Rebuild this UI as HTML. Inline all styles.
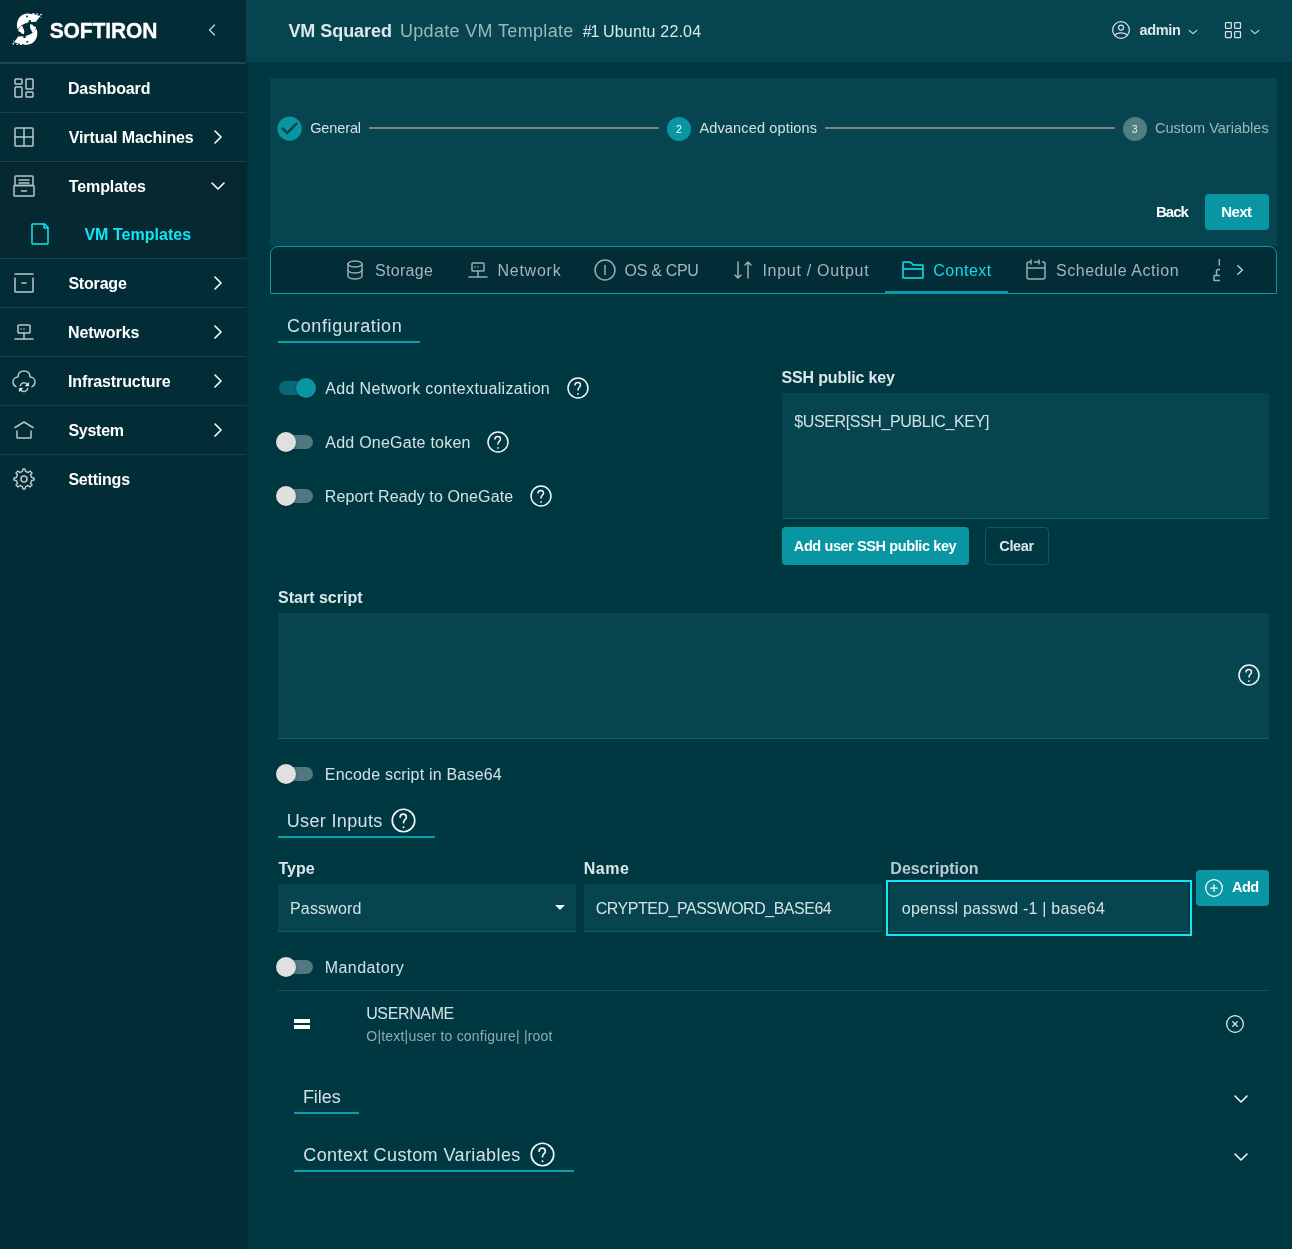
<!DOCTYPE html>
<html lang="en">
<head>
<meta charset="utf-8">
<title>VM Squared - Update VM Template</title>
<style>
html,body{margin:0;padding:0;}
body{width:1292px;height:1249px;overflow:hidden;background:#003842;position:relative;font-family:"Liberation Sans",sans-serif;}
.a{position:absolute;}
.t{position:absolute;white-space:pre;line-height:1;font-family:"Liberation Sans",sans-serif;}
svg{position:absolute;overflow:visible;}
.side{left:0;top:0;width:246px;height:1249px;background:#022c36;box-shadow:1px 0 2px rgba(0,0,0,.28);}
.sdiv{left:0;width:246px;height:1px;background:#1c4049;}
.hdr{left:246px;top:0;width:1046px;height:62px;background:#06454f;}
.panel{background:#06454f;}
.track{width:34px;height:14px;border-radius:7px;background:#50787f;}
.knob{width:20px;height:20px;border-radius:10px;background:#e0e0e0;box-shadow:0 1px 3px rgba(0,0,0,.32);}
.ul{height:2px;background:#0a9eac;}
.field{background:#06454f;border-bottom:1px solid #07636c;box-sizing:border-box;}
</style>
</head>
<body>
<!-- sidebar -->
<div class="a side"></div>
<div class="a" style="left:0;top:162px;width:246px;height:96px;background:#062831"></div>
<div class="a sdiv" style="top:62px;height:2px;background:#1f444d"></div>
<div class="a sdiv" style="top:112px"></div>
<div class="a sdiv" style="top:161px"></div>
<div class="a sdiv" style="top:258px"></div>
<div class="a sdiv" style="top:307px"></div>
<div class="a sdiv" style="top:356px"></div>
<div class="a sdiv" style="top:405px"></div>
<div class="a sdiv" style="top:454px"></div>
<!-- header -->
<div class="a hdr"></div>
<!-- stepper panel -->
<div class="a panel" style="left:270px;top:78px;width:1007px;height:168px"></div>
<div class="a" style="left:667px;top:117px;width:24px;height:24px;border-radius:12px;background:#0a95a2"></div>
<div class="a" style="left:1123px;top:117px;width:24px;height:24px;border-radius:12px;background:#507d84"></div>
<div class="a" style="left:369px;top:127px;width:290px;height:2px;background:#857e7e"></div>
<div class="a" style="left:825px;top:127px;width:290px;height:2px;background:#857e7e"></div>
<div class="a" style="left:1205px;top:194px;width:64px;height:36px;border-radius:4px;background:#0a95a2"></div>
<!-- tabs bar -->
<div class="a" style="left:270px;top:246px;width:1007px;height:48px;box-sizing:border-box;background:#022c36;border:1px solid #0a95a2;border-radius:8px 8px 0 0"></div>
<div class="a ul" style="left:885px;top:291px;width:123px"></div>
<!-- section underlines -->
<div class="a ul" style="left:278px;top:341px;width:142px"></div>
<div class="a ul" style="left:278px;top:836px;width:157px"></div>
<div class="a ul" style="left:294px;top:1112px;width:65px"></div>
<div class="a ul" style="left:294px;top:1170px;width:280px"></div>
<!-- toggles -->
<div class="a track" style="left:279px;top:381px;background:#066975"></div>
<div class="a knob" style="left:296px;top:378px;background:#0995a2"></div>
<div class="a track" style="left:279px;top:435px"></div>
<div class="a knob" style="left:276px;top:432px"></div>
<div class="a track" style="left:279px;top:489px"></div>
<div class="a knob" style="left:276px;top:486px"></div>
<div class="a track" style="left:279px;top:767px"></div>
<div class="a knob" style="left:276px;top:764px"></div>
<div class="a track" style="left:279px;top:960px"></div>
<div class="a knob" style="left:276px;top:957px"></div>
<!-- fields -->
<div class="a field" style="left:782px;top:393px;width:487px;height:126px"></div>
<div class="a" style="left:782px;top:527px;width:187px;height:38px;border-radius:4px;background:#0a95a2"></div>
<div class="a" style="left:985px;top:527px;width:64px;height:38px;border-radius:4px;box-sizing:border-box;border:1px solid #065e68"></div>
<div class="a field" style="left:278px;top:613px;width:991px;height:126px"></div>
<div class="a field" style="left:278px;top:884px;width:298px;height:48px"></div>
<div class="a field" style="left:584px;top:884px;width:298px;height:48px"></div>
<div class="a" style="left:886px;top:880px;width:306px;height:56px;box-sizing:border-box;border:2px solid #10e6f4"></div>
<div class="a field" style="left:890px;top:884px;width:298px;height:48px"></div>
<div class="a" style="left:1196px;top:870px;width:73px;height:36px;border-radius:4px;background:#0a95a2"></div>
<!-- list -->
<div class="a" style="left:278px;top:990px;width:991px;height:1px;background:#1a4f58"></div>
<div class="a" style="left:294px;top:1019px;width:16px;height:4px;background:#fff"></div>
<div class="a" style="left:294px;top:1025px;width:16px;height:4px;background:#fff"></div>
<svg style="left:12px;top:76px" width="24" height="24" viewBox="0 0 24 24" fill="none" stroke="#b7c6c9" stroke-width="1.5" stroke-linecap="round" stroke-linejoin="round" ><rect x="3" y="3" width="7" height="5" rx=".8"/><rect x="3" y="11" width="7" height="10" rx=".8"/><rect x="14" y="3" width="7" height="10" rx=".8"/><rect x="14" y="16" width="7" height="5" rx=".8"/></svg>
<svg style="left:12px;top:125px" width="24" height="24" viewBox="0 0 24 24" fill="none" stroke="#b7c6c9" stroke-width="1.5" stroke-linecap="round" stroke-linejoin="round" ><rect x="3" y="3" width="18" height="18" rx=".8"/><path d="M12 3v18M3 12h18"/></svg>
<svg style="left:12px;top:174px" width="24" height="24" viewBox="0 0 24 24" fill="none" stroke="#b7c6c9" stroke-width="1.5" stroke-linecap="round" stroke-linejoin="round" ><rect x="3" y="2" width="18" height="9.5" rx=".8"/><rect x="2" y="11.5" width="20" height="10.5" rx=".8"/><path d="M7 6h10M7 9h10M9.5 17h5"/></svg>
<svg style="left:28px;top:222px" width="24" height="24" viewBox="0 0 24 24" fill="none" stroke="#10e6f4" stroke-width="1.5" stroke-linecap="round" stroke-linejoin="round" ><path d="M4 21.4V2.6a.6.6 0 0 1 .6-.6h11.652a.6.6 0 0 1 .424.176l3.148 3.148A.6.6 0 0 1 20 5.749V21.4a.6.6 0 0 1-.6.6H4.6a.6.6 0 0 1-.6-.6z"/><path d="M16 2v3.4a.6.6 0 0 0 .6.6H20"/></svg>
<svg style="left:12px;top:271px" width="24" height="24" viewBox="0 0 24 24" fill="none" stroke="#b7c6c9" stroke-width="1.5" stroke-linecap="round" stroke-linejoin="round" ><path d="M10 12h4M3 3h18M21 7v13.4a.6.6 0 0 1-.6.6H3.6a.6.6 0 0 1-.6-.6V7"/></svg>
<svg style="left:12px;top:320px" width="24" height="24" viewBox="0 0 24 24" fill="none" stroke="#b7c6c9" stroke-width="1.5" stroke-linecap="round" stroke-linejoin="round" ><rect x="6" y="5" width="12" height="8" rx=".8"/><path d="M12 13v6M3 19h18"/><path d="M9 9h.01M12 9h.01" stroke-width="1.6"/></svg>
<svg style="left:12px;top:369px" width="24" height="24" viewBox="0 0 24 24" fill="none" stroke="#b7c6c9" stroke-width="1.5" stroke-linecap="round" stroke-linejoin="round" ><path d="M20 17.607c1.494-.585 3-1.918 3-4.607 0-4-3.333-5-5-5 0-2 0-6-6-6S6 6 6 8c-1.667 0-5 1-5 5 0 2.689 1.506 4.022 3 4.607"/><path d="M8.4 16.6a3.8 3.8 0 0 1 6.6-1.6"/><path d="M15.6 19.6a3.8 3.8 0 0 1-6.6 1.6"/><path d="M16.6 13.9v3h-3z" fill="#fff" stroke="#fff" stroke-width=".6"/><path d="M7.4 22.3v-3h3z" fill="#fff" stroke="#fff" stroke-width=".6"/></svg>
<svg style="left:12px;top:418px" width="24" height="24" viewBox="0 0 24 24" fill="none" stroke="#b7c6c9" stroke-width="1.5" stroke-linecap="round" stroke-linejoin="round" ><path d="M3 9.5L12 4l9 5.5"/><path d="M19 13v6.400a.6.6 0 0 1-.6.600H5.600a.6.6 0 0 1-.6-.6V13"/></svg>
<svg style="left:12px;top:467px" width="24" height="24" viewBox="0 0 24 24" fill="none" stroke="#b7c6c9" stroke-width="1.5" stroke-linecap="round" stroke-linejoin="round" ><circle cx="12" cy="12" r="3"/><path d="M19.622 10.395l-1.097-2.650L20 6l-2-2-1.735 1.483-2.707-1.113L12.935 2h-1.954l-.632 2.401-2.645 1.115L6 4 4 6l1.453 1.789-1.080 2.657L2 11v2l2.401.655L5.516 16.300 4 18l2 2 1.791-1.460 2.606 1.072L11 22h2l.604-2.387 2.651-1.098C16.697 18.831 18 20 18 20l2-2-1.484-1.750 1.098-2.652 2.386-.620V11l-2.378-.605z"/></svg>
<svg style="left:202.0px;top:20.15px" width="20" height="20" viewBox="0 0 24 24" fill="none" stroke="#c4d2d4" stroke-width="1.5" stroke-linecap="round" stroke-linejoin="round" ><path d="M15 6l-6 6 6 6"/></svg>
<svg style="left:206px;top:124.8px" width="24" height="24" viewBox="0 0 24 24" fill="none" stroke="#ffffff" stroke-width="1.6" stroke-linecap="round" stroke-linejoin="round" ><path d="M9 6l6 6-6 6"/></svg>
<svg style="left:206px;top:270.8px" width="24" height="24" viewBox="0 0 24 24" fill="none" stroke="#ffffff" stroke-width="1.6" stroke-linecap="round" stroke-linejoin="round" ><path d="M9 6l6 6-6 6"/></svg>
<svg style="left:206px;top:319.8px" width="24" height="24" viewBox="0 0 24 24" fill="none" stroke="#ffffff" stroke-width="1.6" stroke-linecap="round" stroke-linejoin="round" ><path d="M9 6l6 6-6 6"/></svg>
<svg style="left:206px;top:368.8px" width="24" height="24" viewBox="0 0 24 24" fill="none" stroke="#ffffff" stroke-width="1.6" stroke-linecap="round" stroke-linejoin="round" ><path d="M9 6l6 6-6 6"/></svg>
<svg style="left:206px;top:417.8px" width="24" height="24" viewBox="0 0 24 24" fill="none" stroke="#ffffff" stroke-width="1.6" stroke-linecap="round" stroke-linejoin="round" ><path d="M9 6l6 6-6 6"/></svg>
<svg style="left:206px;top:174px" width="24" height="24" viewBox="0 0 24 24" fill="none" stroke="#ffffff" stroke-width="1.6" stroke-linecap="round" stroke-linejoin="round" ><path d="M6 9l6 6 6-6"/></svg>
<svg style="left:1111px;top:20px" width="20" height="20" viewBox="0 0 24 24" fill="none" stroke="#d3e1e3" stroke-width="1.5" stroke-linecap="round" stroke-linejoin="round" ><circle cx="12" cy="12" r="10"/><path d="M4.271 18.346S6.500 15.500 12 15.500s7.730 2.846 7.730 2.846"/><circle cx="12" cy="9" r="3"/></svg>
<svg style="left:1223px;top:20px" width="20" height="20" viewBox="0 0 24 24" fill="none" stroke="#d3e1e3" stroke-width="1.5" stroke-linecap="round" stroke-linejoin="round" ><rect x="3" y="3" width="7" height="7" rx=".6"/><rect x="14" y="3" width="7" height="7" rx=".6"/><rect x="3" y="14" width="7" height="7" rx=".6"/><rect x="14" y="14" width="7" height="7" rx=".6"/></svg>
<svg style="left:1187px;top:25.7px" width="12" height="12" viewBox="0 0 12 12" fill="none" stroke="#d3e1e3" stroke-width="1.1" stroke-linecap="round" stroke-linejoin="round"><path d="M2.200 4.300l3.800 3.400 3.800-3.400"/></svg>
<svg style="left:1249px;top:25.7px" width="12" height="12" viewBox="0 0 12 12" fill="none" stroke="#d3e1e3" stroke-width="1.1" stroke-linecap="round" stroke-linejoin="round"><path d="M2.200 4.300l3.800 3.400 3.800-3.400"/></svg>
<svg style="left:275.400px;top:114.400px" width="29.200" height="29.200" viewBox="0 0 24 24"><path fill="#0995a2" d="M12 2C6.480 2 2 6.480 2 12s4.480 10 10 10 10-4.480 10-10S17.520 2 12 2zm-2 15l-5-5 1.410-1.410L10 14.170l7.590-7.590L19 8l-9 9z"/></svg>
<svg style="left:343px;top:258px" width="24" height="24" viewBox="0 0 24 24" fill="none" stroke="#9aadb0" stroke-width="1.5" stroke-linecap="round" stroke-linejoin="round" ><path d="M5 12v6s0 3 7 3 7-3 7-3v-6"/><path d="M5 6v6s0 3 7 3 7-3 7-3V6"/><path d="M12 3c7 0 7 3 7 3s0 3-7 3-7-3-7-3 0-3 7-3z"/></svg>
<svg style="left:466px;top:258px" width="24" height="24" viewBox="0 0 24 24" fill="none" stroke="#9aadb0" stroke-width="1.5" stroke-linecap="round" stroke-linejoin="round" ><rect x="6" y="5" width="12" height="8" rx=".8"/><path d="M12 13v6M3 19h18"/><path d="M9 9h.01M12 9h.01" stroke-width="1.6"/></svg>
<svg style="left:593px;top:258px" width="24" height="24" viewBox="0 0 24 24" fill="none" stroke="#9aadb0" stroke-width="1.5" stroke-linecap="round" stroke-linejoin="round" ><circle cx="12" cy="12" r="10"/><path d="M12 7.500v9"/></svg>
<svg style="left:731px;top:258px" width="24" height="24" viewBox="0 0 24 24" fill="none" stroke="#9aadb0" stroke-width="1.5" stroke-linecap="round" stroke-linejoin="round" ><path d="M17 20V4m0 0l3 3m-3-3l-3 3M7 4v16m0 0l3-3m-3 3l-3-3"/></svg>
<svg style="left:901px;top:258px" width="24" height="24" viewBox="0 0 24 24" fill="none" stroke="#10e6f4" stroke-width="1.5" stroke-linecap="round" stroke-linejoin="round" ><path d="M2 11V4.600a.6.6 0 0 1 .6-.6h6.178a.6.6 0 0 1 .390.144l3.164 2.712a.6.6 0 0 0 .390.144H21.400a.6.6 0 0 1 .6.600V11M2 11v8.400a.6.6 0 0 0 .6.600h18.800a.6.6 0 0 0 .6-.6V11M2 11h20"/></svg>
<svg style="left:1024px;top:258px" width="24" height="24" viewBox="0 0 24 24" fill="none" stroke="#9aadb0" stroke-width="1.5" stroke-linecap="round" stroke-linejoin="round" ><path d="M15 4V2m0 2v2m0-2h-4.500M3 10v9a2 2 0 0 0 2 2h14a2 2 0 0 0 2-2v-9H3zM3 10V6a2 2 0 0 1 2-2h2M7 2v4M21 10V6a2 2 0 0 0-2-2h-.5"/></svg>
<div class="a" style="left:1208px;top:256px;width:12px;height:28px;overflow:hidden"><svg style="left:0;top:0" width="24" height="28" viewBox="0 0 24 28" fill="none" stroke="#9aadb0" stroke-width="1.5" stroke-linecap="round" stroke-linejoin="round"><path d="M11.300 3.500v5.500M14 13.500h-3.500a2 2 0 0 0-2 2v3.500M14 19.500H6v5h8"/></svg></div>
<svg style="left:1234px;top:264px" width="12" height="12" viewBox="0 0 12 12" fill="none" stroke="#c9d6d8" stroke-width="1.300" stroke-linecap="round" stroke-linejoin="round"><path d="M3.800 1.700l4.600 4.300-4.600 4.300"/></svg>
<svg style="left:566.0px;top:376.1px" width="24" height="24" viewBox="0 0 24 24" fill="none" stroke="#f2f6f6" stroke-width="1.5" stroke-linecap="round" stroke-linejoin="round" ><circle cx="12" cy="12" r="10"/><path d="M9 9c0-3.500 5.500-3.500 5.500 0 0 2.500-2.500 2-2.500 5"/><path d="M12 18.010l.01-.011" stroke-width="1.700"/></svg>
<svg style="left:486.0px;top:430.1px" width="24" height="24" viewBox="0 0 24 24" fill="none" stroke="#f2f6f6" stroke-width="1.5" stroke-linecap="round" stroke-linejoin="round" ><circle cx="12" cy="12" r="10"/><path d="M9 9c0-3.500 5.500-3.500 5.500 0 0 2.500-2.500 2-2.500 5"/><path d="M12 18.010l.01-.011" stroke-width="1.700"/></svg>
<svg style="left:529.0px;top:484.1px" width="24" height="24" viewBox="0 0 24 24" fill="none" stroke="#f2f6f6" stroke-width="1.5" stroke-linecap="round" stroke-linejoin="round" ><circle cx="12" cy="12" r="10"/><path d="M9 9c0-3.500 5.500-3.500 5.500 0 0 2.500-2.500 2-2.500 5"/><path d="M12 18.010l.01-.011" stroke-width="1.700"/></svg>
<svg style="left:1237.0px;top:663.0px" width="24" height="24" viewBox="0 0 24 24" fill="none" stroke="#f2f6f6" stroke-width="1.5" stroke-linecap="round" stroke-linejoin="round" ><circle cx="12" cy="12" r="10"/><path d="M9 9c0-3.500 5.500-3.500 5.500 0 0 2.500-2.500 2-2.500 5"/><path d="M12 18.010l.01-.011" stroke-width="1.700"/></svg>
<svg style="left:390.0px;top:806.9px" width="27" height="27" viewBox="0 0 24 24" fill="none" stroke="#f2f6f6" stroke-width="1.5" stroke-linecap="round" stroke-linejoin="round" ><circle cx="12" cy="12" r="10"/><path d="M9 9c0-3.500 5.500-3.500 5.500 0 0 2.500-2.500 2-2.500 5"/><path d="M12 18.010l.01-.011" stroke-width="1.700"/></svg>
<svg style="left:529.1px;top:1141.0px" width="27" height="27" viewBox="0 0 24 24" fill="none" stroke="#f2f6f6" stroke-width="1.5" stroke-linecap="round" stroke-linejoin="round" ><circle cx="12" cy="12" r="10"/><path d="M9 9c0-3.500 5.500-3.500 5.500 0 0 2.500-2.500 2-2.500 5"/><path d="M12 18.010l.01-.011" stroke-width="1.700"/></svg>
<svg style="left:554px;top:905px" width="12" height="6" viewBox="0 0 12 6"><path d="M1 0h10L6 5z" fill="#f2f6f6"/></svg>
<svg style="left:1204px;top:877.9px" width="20" height="20" viewBox="0 0 24 24" fill="none" stroke="#ffffff" stroke-width="1.5" stroke-linecap="round" stroke-linejoin="round" ><circle cx="12" cy="12" r="10"/><path d="M8 12h8M12 8v8"/></svg>
<svg style="left:1225px;top:1014px" width="20" height="20" viewBox="0 0 24 24" fill="none" stroke="#e6eeee" stroke-width="1.5" stroke-linecap="round" stroke-linejoin="round" ><circle cx="12" cy="12" r="10"/><path d="M9.172 14.828L12 12m2.828-2.828L12 12m0 0L9.172 9.172M12 12l2.828 2.828"/></svg>
<svg style="left:1229px;top:1086.9px" width="24" height="24" viewBox="0 0 24 24" fill="none" stroke="#f2f6f6" stroke-width="1.6" stroke-linecap="round" stroke-linejoin="round" ><path d="M6 9l6 6 6-6"/></svg>
<svg style="left:1229px;top:1145px" width="24" height="24" viewBox="0 0 24 24" fill="none" stroke="#f2f6f6" stroke-width="1.6" stroke-linecap="round" stroke-linejoin="round" ><path d="M6 9l6 6 6-6"/></svg>
<svg style="left:6px;top:8px" width="44" height="44" viewBox="0 0 1249 1249" fill="#ffffff"><g><path d="M335 612C296 520 300 380 380 272C450 182 560 146 680 160L738 176L756 150L800 150L822 190L862 190L900 205L955 250L925 300L885 340L860 388L700 400C560 420 420 482 335 612Z"/><path d="M690 452L762 482L792 522L852 542L842 602L792 672L742 702L722 642L700 602L680 542Z" stroke="#022c36" stroke-width="26" paint-order="stroke"/><rect x="862" y="150" width="40" height="40"/><rect x="972" y="166" width="42" height="42"/><rect x="922" y="212" width="42" height="42"/><rect x="975" y="250" width="25" height="25"/><rect x="572" y="217" width="48" height="48" fill="#022c36"/><rect x="642" y="346" width="66" height="62" fill="#022c36"/></g><g transform="rotate(180 600 600)"><path d="M335 612C296 520 300 380 380 272C450 182 560 146 680 160L738 176L756 150L800 150L822 190L862 190L900 205L955 250L925 300L885 340L860 388L700 400C560 420 420 482 335 612Z"/><path d="M690 452L762 482L792 522L852 542L842 602L792 672L742 702L722 642L700 602L680 542Z" stroke="#022c36" stroke-width="26" paint-order="stroke"/><rect x="862" y="150" width="40" height="40"/><rect x="972" y="166" width="42" height="42"/><rect x="922" y="212" width="42" height="42"/><rect x="975" y="250" width="25" height="25"/><rect x="572" y="217" width="48" height="48" fill="#022c36"/><rect x="642" y="346" width="66" height="62" fill="#022c36"/></g></svg>
<div class="a" style="left:0;top:0;width:1292px;height:1249px;will-change:transform">
<span class="t" style="left:49.71px;top:19px;font-size:21px;font-weight:700;color:#ffffff;letter-spacing:-0.129px;transform:scaleY(1.08);transform-origin:50% 52%;-webkit-text-stroke:0.35px #fff;">SOFTIRON</span>
<span class="t" style="left:67.95px;top:81px;font-size:16px;font-weight:700;color:#ffffff;letter-spacing:-0.128px;">Dashboard</span>
<span class="t" style="left:68.79px;top:130px;font-size:16px;font-weight:700;color:#ffffff;letter-spacing:-0.127px;">Virtual Machines</span>
<span class="t" style="left:68.87px;top:179px;font-size:16px;font-weight:700;color:#ffffff;letter-spacing:-0.124px;">Templates</span>
<span class="t" style="left:68.38px;top:276px;font-size:16px;font-weight:700;color:#ffffff;letter-spacing:-0.181px;">Storage</span>
<span class="t" style="left:67.95px;top:325px;font-size:16px;font-weight:700;color:#ffffff;letter-spacing:-0.074px;">Networks</span>
<span class="t" style="left:67.95px;top:374px;font-size:16px;font-weight:700;color:#ffffff;letter-spacing:-0.109px;">Infrastructure</span>
<span class="t" style="left:68.38px;top:423px;font-size:16px;font-weight:700;color:#ffffff;letter-spacing:-0.257px;">System</span>
<span class="t" style="left:68.38px;top:472px;font-size:16px;font-weight:700;color:#ffffff;letter-spacing:-0.208px;">Settings</span>
<span class="t" style="left:84.39px;top:227px;font-size:16px;font-weight:700;color:#10e6f4;letter-spacing:0.030px;">VM Templates</span>
<span class="t" style="left:288.39px;top:22px;font-size:18px;font-weight:700;color:#dbe7e9;letter-spacing:-0.049px;">VM Squared</span>
<span class="t" style="left:399.89px;top:22px;font-size:18px;font-weight:400;color:#9cb7bb;letter-spacing:0.336px;">Update VM Template</span>
<span class="t" style="left:582.85px;top:24px;font-size:16px;font-weight:400;color:#dbe7e9;letter-spacing:-1.200px;">#1</span>
<span class="t" style="left:603.03px;top:24px;font-size:16px;font-weight:400;color:#dbe7e9;letter-spacing:0.182px;">Ubuntu 22.04</span>
<span class="t" style="left:1139.52px;top:23px;font-size:14.5px;font-weight:700;color:#dbe7e9;letter-spacing:-0.327px;">admin</span>
<span class="t" style="left:310.14px;top:121px;font-size:14.5px;font-weight:400;color:#d3e1e3;letter-spacing:-0.108px;">General</span>
<span class="t" style="left:699.43px;top:121px;font-size:14.5px;font-weight:400;color:#d3e1e3;letter-spacing:0.148px;">Advanced options</span>
<span class="t" style="left:1155.01px;top:121px;font-size:14.5px;font-weight:400;color:#9cb7bb;letter-spacing:0.022px;">Custom Variables</span>
<span class="t" style="left:675.95px;top:124px;font-size:10.5px;font-weight:400;color:#ffffff;letter-spacing:0.000px;">2</span>
<span class="t" style="left:1131.87px;top:124px;font-size:10.5px;font-weight:400;color:#e6eeee;letter-spacing:0.000px;">3</span>
<span class="t" style="left:1156.00px;top:204px;font-size:15px;font-weight:700;color:#ffffff;letter-spacing:-0.980px;">Back</span>
<span class="t" style="left:1221.20px;top:204px;font-size:15px;font-weight:700;color:#ffffff;letter-spacing:-0.586px;">Next</span>
<span class="t" style="left:374.90px;top:263px;font-size:16px;font-weight:400;color:#a3b7ba;letter-spacing:0.327px;">Storage</span>
<span class="t" style="left:497.45px;top:263px;font-size:16px;font-weight:400;color:#a3b7ba;letter-spacing:0.752px;">Network</span>
<span class="t" style="left:624.61px;top:263px;font-size:16px;font-weight:400;color:#a3b7ba;letter-spacing:-0.306px;">OS &amp; CPU</span>
<span class="t" style="left:762.41px;top:263px;font-size:16px;font-weight:400;color:#a3b7ba;letter-spacing:0.715px;">Input / Output</span>
<span class="t" style="left:933.29px;top:263px;font-size:16px;font-weight:400;color:#12dceb;letter-spacing:0.469px;">Context</span>
<span class="t" style="left:1055.90px;top:263px;font-size:16px;font-weight:400;color:#a3b7ba;letter-spacing:0.564px;">Schedule Action</span>
<span class="t" style="left:287.10px;top:317px;font-size:18px;font-weight:400;color:#d3e1e3;letter-spacing:0.627px;">Configuration</span>
<span class="t" style="left:286.69px;top:812px;font-size:18px;font-weight:400;color:#d3e1e3;letter-spacing:0.359px;">User Inputs</span>
<span class="t" style="left:302.91px;top:1088px;font-size:18px;font-weight:400;color:#d3e1e3;letter-spacing:-0.033px;">Files</span>
<span class="t" style="left:303.30px;top:1146px;font-size:18px;font-weight:400;color:#d3e1e3;letter-spacing:0.404px;">Context Custom Variables</span>
<span class="t" style="left:325.34px;top:381px;font-size:16px;font-weight:400;color:#d3e1e3;letter-spacing:0.329px;">Add Network contextualization</span>
<span class="t" style="left:325.34px;top:435px;font-size:16px;font-weight:400;color:#d3e1e3;letter-spacing:0.232px;">Add OneGate token</span>
<span class="t" style="left:324.75px;top:489px;font-size:16px;font-weight:400;color:#d3e1e3;letter-spacing:0.112px;">Report Ready to OneGate</span>
<span class="t" style="left:324.85px;top:767px;font-size:16px;font-weight:400;color:#d3e1e3;letter-spacing:0.197px;">Encode script in Base64</span>
<span class="t" style="left:324.75px;top:960px;font-size:16px;font-weight:400;color:#d3e1e3;letter-spacing:0.419px;">Mandatory</span>
<span class="t" style="left:781.48px;top:370px;font-size:16px;font-weight:700;color:#dbe7e9;letter-spacing:-0.159px;">SSH public key</span>
<span class="t" style="left:277.98px;top:590px;font-size:16px;font-weight:700;color:#dbe7e9;letter-spacing:0.009px;">Start script</span>
<span class="t" style="left:278.47px;top:861px;font-size:16px;font-weight:700;color:#dbe7e9;letter-spacing:-0.014px;">Type</span>
<span class="t" style="left:583.75px;top:861px;font-size:16px;font-weight:700;color:#dbe7e9;letter-spacing:0.516px;">Name</span>
<span class="t" style="left:890.35px;top:861px;font-size:16px;font-weight:700;color:#b9cbce;letter-spacing:0.025px;">Description</span>
<span class="t" style="left:794.22px;top:414px;font-size:16px;font-weight:400;color:#d3e1e3;letter-spacing:-0.380px;">$USER[SSH_PUBLIC_KEY]</span>
<span class="t" style="left:793.85px;top:539px;font-size:14.5px;font-weight:700;color:#ffffff;letter-spacing:-0.403px;">Add user SSH public key</span>
<span class="t" style="left:999.27px;top:539px;font-size:14.5px;font-weight:700;color:#dbe7e9;letter-spacing:-0.339px;">Clear</span>
<span class="t" style="left:289.95px;top:901px;font-size:16px;font-weight:400;color:#d3e1e3;letter-spacing:0.189px;">Password</span>
<span class="t" style="left:595.69px;top:901px;font-size:16px;font-weight:400;color:#d3e1e3;letter-spacing:-0.478px;">CRYPTED_PASSWORD_BASE64</span>
<span class="t" style="left:901.81px;top:901px;font-size:16px;font-weight:400;color:#d3e1e3;letter-spacing:0.197px;">openssl passwd -1 | base64</span>
<span class="t" style="left:1231.95px;top:880px;font-size:14.5px;font-weight:700;color:#ffffff;letter-spacing:-0.453px;">Add</span>
<span class="t" style="left:366.13px;top:1006px;font-size:16px;font-weight:400;color:#d3e1e3;letter-spacing:-0.361px;">USERNAME</span>
<span class="t" style="left:366.31px;top:1029px;font-size:14px;font-weight:400;color:#8fabaf;letter-spacing:0.196px;">O|text|user to configure| |root</span>
</div>
</body>
</html>
